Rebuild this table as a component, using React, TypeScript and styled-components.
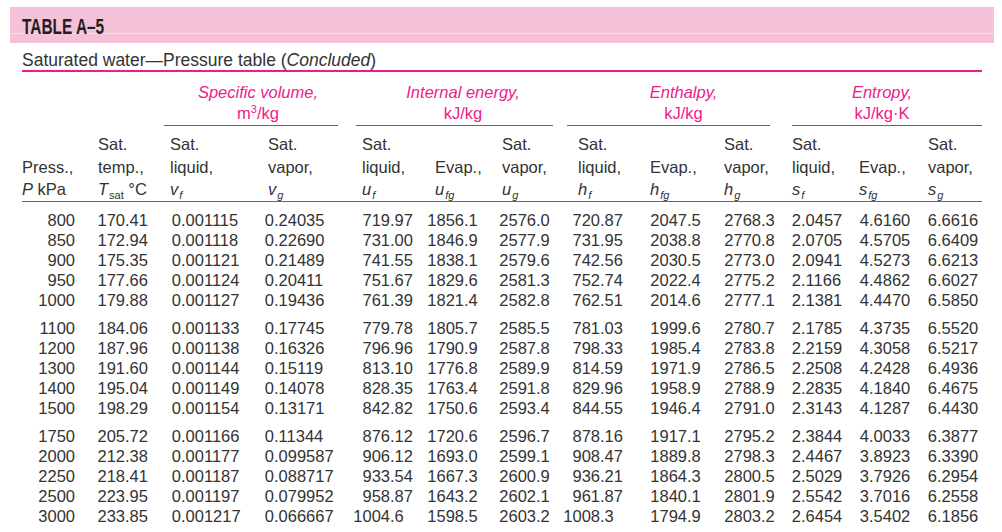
import React from 'react';
import styled, { createGlobalStyle } from 'styled-components';

const PINK = '#ec1c8c';
const INK = '#333333';
const COLS = '76px 72px 98px 94px 73px 67px 76px 72px 74px 68px 67px 69px 54px';

// where the decimal point sits, measured from each column's left edge
const OFFSETS = [53, 27, 11, 6, 28, 29, 34, 22, 37, 37, 9, 10, 9];

const GlobalStyle = createGlobalStyle`
  body {
    margin: 0;
    background: #ffffff;
    color: ${INK};
    font-family: "Liberation Sans", Arial, sans-serif;
  }
`;

const I = styled.i`
  font-style: italic;
`;

const SubText = styled.sub<{ $upright?: boolean }>`
  font-size: 11px;
  line-height: 0;
  vertical-align: -4px;
  font-style: ${(p) => (p.$upright ? 'normal' : 'italic')};
  margin-left: 1px;
`;

const Sup = styled.sup`
  font-size: 11px;
  line-height: 0;
  vertical-align: 6px;
`;

const Var = ({ v, s, upright }: { v: string; s: string; upright?: boolean }) => (
  <>
    <I>{v}</I>
    <SubText $upright={upright}>{s}</SubText>
  </>
);

const headers: React.ReactNode[][] = [
  ['Press.,', <><I>P</I> kPa</>],
  ['Sat.', 'temp.,', <><Var v="T" s="sat" upright /> °C</>],
  ['Sat.', 'liquid,', <Var v="v" s="f" />],
  ['Sat.', 'vapor,', <Var v="v" s="g" />],
  ['Sat.', 'liquid,', <Var v="u" s="f" />],
  ['Evap.,', <Var v="u" s="fg" />],
  ['Sat.', 'vapor,', <Var v="u" s="g" />],
  ['Sat.', 'liquid,', <Var v="h" s="f" />],
  ['Evap.,', <Var v="h" s="fg" />],
  ['Sat.', 'vapor,', <Var v="h" s="g" />],
  ['Sat.', 'liquid,', <Var v="s" s="f" />],
  ['Evap.,', <Var v="s" s="fg" />],
  ['Sat.', 'vapor,', <Var v="s" s="g" />],
];

const groups = [
  { col: 2, title: 'Specific volume,', unit: <>m<Sup>3</Sup>/kg</>, shift: 14 },
  { col: 4, title: 'Internal energy,', unit: 'kJ/kg', shift: 17 },
  { col: 6, title: 'Enthalpy,', unit: 'kJ/kg', shift: 30 },
  { col: 8, title: 'Entropy,', unit: 'kJ/kg·K', shift: -10 },
];

const data = [
  [
    '800 170.41 0.001115 0.24035 719.97 1856.1 2576.0 720.87 2047.5 2768.3 2.0457 4.6160 6.6616',
    '850 172.94 0.001118 0.22690 731.00 1846.9 2577.9 731.95 2038.8 2770.8 2.0705 4.5705 6.6409',
    '900 175.35 0.001121 0.21489 741.55 1838.1 2579.6 742.56 2030.5 2773.0 2.0941 4.5273 6.6213',
    '950 177.66 0.001124 0.20411 751.67 1829.6 2581.3 752.74 2022.4 2775.2 2.1166 4.4862 6.6027',
    '1000 179.88 0.001127 0.19436 761.39 1821.4 2582.8 762.51 2014.6 2777.1 2.1381 4.4470 6.5850',
  ],
  [
    '1100 184.06 0.001133 0.17745 779.78 1805.7 2585.5 781.03 1999.6 2780.7 2.1785 4.3735 6.5520',
    '1200 187.96 0.001138 0.16326 796.96 1790.9 2587.8 798.33 1985.4 2783.8 2.2159 4.3058 6.5217',
    '1300 191.60 0.001144 0.15119 813.10 1776.8 2589.9 814.59 1971.9 2786.5 2.2508 4.2428 6.4936',
    '1400 195.04 0.001149 0.14078 828.35 1763.4 2591.8 829.96 1958.9 2788.9 2.2835 4.1840 6.4675',
    '1500 198.29 0.001154 0.13171 842.82 1750.6 2593.4 844.55 1946.4 2791.0 2.3143 4.1287 6.4430',
  ],
  [
    '1750 205.72 0.001166 0.11344 876.12 1720.6 2596.7 878.16 1917.1 2795.2 2.3844 4.0033 6.3877',
    '2000 212.38 0.001177 0.099587 906.12 1693.0 2599.1 908.47 1889.8 2798.3 2.4467 3.8923 6.3390',
    '2250 218.41 0.001187 0.088717 933.54 1667.3 2600.9 936.21 1864.3 2800.5 2.5029 3.7926 6.2954',
    '2500 223.95 0.001197 0.079952 958.87 1643.2 2602.1 961.87 1840.1 2801.9 2.5542 3.7016 6.2558',
    '3000 233.85 0.001217 0.066667 1004.6 1598.5 2603.2 1008.3 1794.9 2803.2 2.6454 3.5402 6.1856',
  ],
];

const Page = styled.div`
  width: 1002px;
  height: 532px;
  padding-top: 7px;
  box-sizing: border-box;
  overflow: hidden;
`;

const TitleBar = styled.div`
  margin-left: 10px;
  width: 984px;
  height: 36px;
  padding-left: 12px;
  box-sizing: border-box;
  display: flex;
  background: linear-gradient(
    to bottom,
    #f4c1d8 0 26px,
    #fadbe8 26px 27px,
    #f4c1d8 27px 100%
  );
`;

const Title = styled.div`
  margin-top: 9px;
  font-family: "Liberation Sans", Arial, sans-serif;
  font-weight: 700;
  font-size: 22px;
  line-height: 22px;
  color: #231f20;
  white-space: nowrap;
  transform: scaleX(0.7);
  transform-origin: left center;
`;

const Content = styled.div`
  margin-left: 22px;
  width: 960px;
`;

const Caption = styled.div`
  margin-top: 7px;
  font-size: 17.5px;
  line-height: 20px;
  border-bottom: 2px solid ${PINK};
`;

const GroupRow = styled.div`
  margin-top: 10px;
  display: grid;
  grid-template-columns: 142px 174px 18px 197px 14px 203px 22px 190px;
`;

const GroupHead = styled.div<{ $col: number; $shift: number }>`
  grid-column: ${(p) => p.$col};
  display: flex;
  flex-direction: column;
  align-items: center;
  padding-left: ${(p) => Math.max(p.$shift, 0)}px;
  padding-right: ${(p) => Math.max(-p.$shift, 0)}px;
  padding-bottom: 1px;
  border-bottom: 1.5px solid ${PINK};
  color: ${PINK};
  font-style: italic;
  font-size: 16.5px;
  line-height: 21px;
  white-space: nowrap;
`;

const Unit = styled.span`
  font-style: normal;
`;

const HeadRow = styled.div`
  display: grid;
  grid-template-columns: ${COLS};
  align-items: end;
  padding-top: 7px;
  border-bottom: 1.5px solid ${PINK};
  font-size: 16.5px;
  line-height: 22.5px;
`;

const HeadCell = styled.div`
  white-space: nowrap;
`;

const Body = styled.div`
  padding-top: 8px;
`;

const Block = styled.div`
  & + & {
    margin-top: 8px;
  }
`;

const Row = styled.div`
  display: grid;
  grid-template-columns: ${COLS};
  height: 20px;
  font-size: 16.5px;
  line-height: 20px;
`;

const NumCell = styled.div`
  display: flex;
  white-space: nowrap;
`;

const Whole = styled.span<{ $width: number }>`
  width: ${(p) => p.$width}px;
  flex-shrink: 0;
  display: flex;
  justify-content: flex-end;
`;

const Num = ({ value, offset }: { value: string; offset: number }) => {
  const dot = value.indexOf('.');
  const whole = dot < 0 ? value : value.slice(0, dot);
  const frac = dot < 0 ? '' : value.slice(dot);
  return (
    <NumCell>
      <Whole $width={offset}>{whole}</Whole>
      <span>{frac}</span>
    </NumCell>
  );
};

export default function App() {
  return (
    <Page>
      <GlobalStyle />
      <TitleBar>
        <Title>TABLE A–5</Title>
      </TitleBar>
      <Content>
        <Caption>
          Saturated water—Pressure table (<I>Concluded</I>)
        </Caption>
        <GroupRow>
          {groups.map((g) => (
            <GroupHead key={g.title} $col={g.col} $shift={g.shift}>
              <span>{g.title}</span>
              <Unit>{g.unit}</Unit>
            </GroupHead>
          ))}
        </GroupRow>
        <HeadRow>
          {headers.map((lines, i) => (
            <HeadCell key={i}>
              {lines.map((line, j) => (
                <div key={j}>{line}</div>
              ))}
            </HeadCell>
          ))}
        </HeadRow>
        <Body>
          {data.map((block, b) => (
            <Block key={b}>
              {block.map((row) => (
                <Row key={row}>
                  {row.split(' ').map((v, i) => (
                    <Num key={i} value={v} offset={OFFSETS[i]} />
                  ))}
                </Row>
              ))}
            </Block>
          ))}
        </Body>
      </Content>
    </Page>
  );
}
